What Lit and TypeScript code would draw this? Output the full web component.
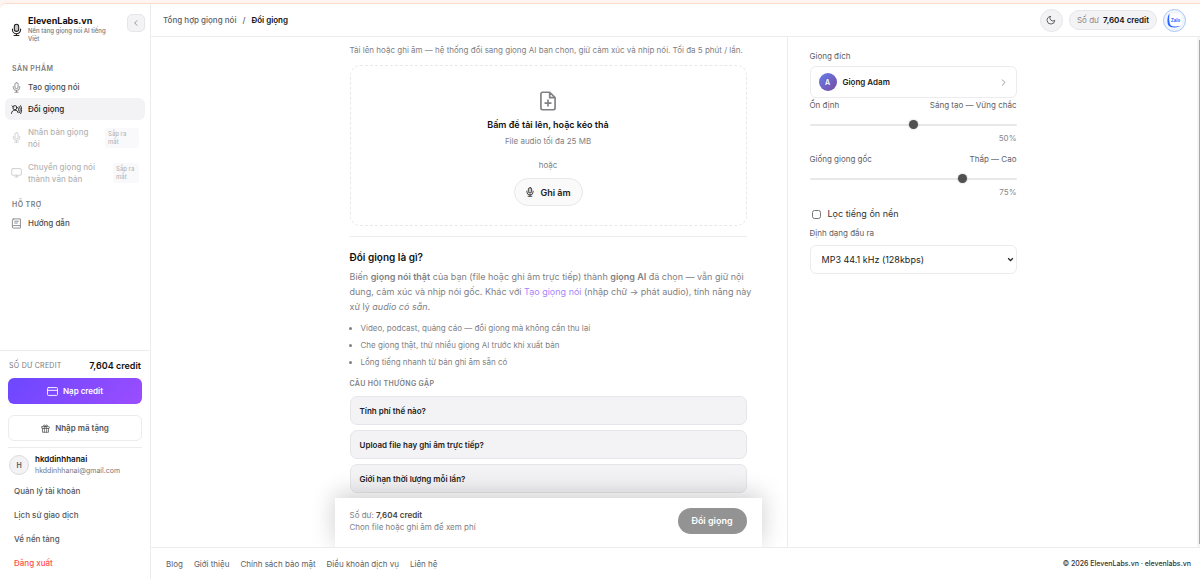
import { LitElement, html, css, svg, nothing } from "lit";
import { customElement, property, state } from "lit/decorators.js";
import { classMap } from "lit/directives/class-map.js";

const icons: Record<string, unknown> = {
  mic: svg`<rect x="8.5" y="1.5" width="7" height="13" rx="3.5"/><path d="M5 10v1.500a7 7 0 0 0 14 0V10M12 18.500V22M8.500 22.200h7"/>`,
  micSolid: svg`<rect x="8" y="1.500" width="8" height="13" rx="4" fill="currentColor" fill-opacity=".25"/><path d="M4.500 10v1.500a7.500 7.500 0 0 0 15 0V10M12 19v3M7.500 22.200h9"/>`,
  people: svg`<circle cx="8.500" cy="8" r="4.500"/><path d="M1 20.500c.5-4.500 3.500-7 7.500-7s6 2 7 5.500M2.500 4l3 3M15.500 8c1.500 2 1.500 5.500 0 8M18 5.500c3 4 3 9.500 0 13.500M21 3.500c3.200 5 3.200 12.500 0 17.500"/>`,
  screen: svg`<rect x="1.500" y="3.500" width="21" height="14.500" rx="2.500"/><path d="M8.500 21.500h7M12 18v3.500"/>`,
  book: svg`<path d="M5.500 2h15v20h-15a2.500 2.500 0 0 1-2.500-2.500v-15A2.500 2.500 0 0 1 5.500 2zM3 19a2.500 2.500 0 0 1 2.500-2.500h15M8 7h8M8 11h6"/>`,
  card: svg`<rect x="1" y="3.500" width="22" height="17" rx="2"/><path d="M1 9.500h22"/>`,
  gift: svg`<rect x="2" y="7" width="20" height="5" rx="1"/><path d="M4 12v10h16V12M9 7v15M15 7v15M12 7C9 7 6.500 5.500 7 3.500S11 2 12 7c1-5 4.500-5.500 5-3.500S15 7 12 7z"/>`,
  left: svg`<path d="M15 5l-7 7 7 7"/>`,
  right: svg`<path d="M9 5l7 7-7 7"/>`,
  down: svg`<path d="M4 8l8 8 8-8" stroke-width="4.500" stroke-linecap="butt" stroke-linejoin="miter"/>`,
  moon: svg`<path d="M10 3.500a7.500 7.500 0 0 0 11 9.500A9.200 9.200 0 1 1 10 3.500z"/>`,
  file: svg`<path d="M14 1.500H5.500a2 2 0 0 0-2 2v17a2 2 0 0 0 2 2h13a2 2 0 0 0 2-2V8zM14 1.500V8h6.500M12 11v7M8.500 14.500h7"/>`,
};

@customElement("ui-icon")
class UiIcon extends LitElement {
  @property() name = "mic";
  static styles = css`
    :host { display: block; flex: none; width: 11px; height: 11px; }
    svg { display: block; width: 100%; height: 100%; fill: none; stroke: currentColor;
      stroke-width: 2; stroke-linecap: round; stroke-linejoin: round; }
  `;
  render() {
    return html`<svg viewBox="0 0 24 24" aria-hidden="true">${icons[this.name]}</svg>`;
  }
}

@customElement("app-sidebar")
class AppSidebar extends LitElement {
  private products = [
    { icon: "mic", label: "Tạo giọng nói" },
    { icon: "people", label: "Đổi giọng", active: true },
    { icon: "mic", label: "Nhân bản giọng nói", soon: true },
    { icon: "screen", label: "Chuyển giọng nói thành văn bản", soon: true },
  ];

  static styles = css`
    * { box-sizing: border-box; }
    :host { display: flex; flex-direction: column; border-right: 1px solid #ececee; min-height: 0; }
    a { color: inherit; text-decoration: none; }
    button { font: inherit; }
    .brand { display: flex; align-items: flex-start; padding: 10px 5px 0 10px; gap: 5px; }
    .brand .logo { width: 13px; height: 14px; margin-top: 9px; color: #222; }
    .names { flex: 1; min-width: 0; padding-right: 10px; }
    .name { font-size: 9px; line-height: 13px; font-weight: 700; color: #111; white-space: nowrap; }
    .tagline { font-size: 6px; line-height: 8px; font-weight: 500; color: #77777b; }
    .collapse { width: 18px; height: 18px; padding: 0; display: grid; place-items: center; color: #666;
      border: 1px solid #e6e6ea; border-radius: 5px; background: #f3f3f6; }
    .collapse ui-icon { width: 8px; height: 8px; }
    nav { padding: 0 5px; margin-top: 19px; flex: 1; }
    .heading { padding: 0 7px; margin: 0; font-size: 7px; line-height: 14px; font-weight: 600;
      letter-spacing: 0.06em; color: #7c7c80; text-transform: uppercase; }
    .items { margin: 0 0 8px; padding: 0; list-style: none; }
    .item { display: flex; align-items: center; gap: 6px; min-height: 22px; padding: 5px 6px;
      border-radius: 6px; font-size: 8px; line-height: 12px; font-weight: 500; color: #4c4c50; }
    .item ui-icon { color: #88888c; }
    .active { background: #f3f3f6; color: #222; }
    .active ui-icon { color: #222; }
    .soon { opacity: 0.42; min-height: 35px; }
    .soon span { flex: 1; }
    .badge { flex: none; font-size: 6px; line-height: 8px; width: 34px; padding: 2px 3px; background: #f3f3f6;
      border-radius: 3px; }
    li:last-child .badge { width: 26px; }
    .account { border-top: 1px solid #ececee; padding: 7px 8px 4px; }
    .balance { display: flex; justify-content: space-between; align-items: center; line-height: 15px;
      padding: 0 1px; font-size: 7px; color: #77777b; }
    .balance span { letter-spacing: 0.04em; }
    .balance b { font-size: 9px; font-weight: 600; color: #111; }
    .topup, .gift { width: 100%; height: 26px; display: flex; align-items: center; justify-content: center; gap: 5px;
      border-radius: 6px; font-size: 8px; font-weight: 600; padding: 0; }
    .topup { margin-top: 5px; border: 0; color: #fff; background: linear-gradient(135deg, #6c47ff, #9b4dff); }
    .gift { margin-top: 11px; border: 1px solid #ececee; background: #fff; color: #555; }
    .gift ui-icon { width: 9px; height: 9px; }
    .user { display: flex; align-items: center; gap: 6px; margin-top: 6px; padding: 6px 1px 0;
      border-top: 1px solid #ececee; }
    .avatar { width: 20px; height: 20px; border: 1px solid #dcdce0; border-radius: 50%; background: #f3f3f6;
      display: grid; place-items: center; font-size: 7px; font-weight: 600; color: #555; }
    .user b { display: block; font-size: 8px; line-height: 11px; font-weight: 600; color: #111; }
    .user small { display: block; font-size: 7px; line-height: 11px; color: #77777b; }
    .links { display: flex; flex-direction: column; padding: 0 6px; margin-top: 3px; font-size: 8px;
      line-height: 24px; font-weight: 500; color: #55555a; }
    .links .logout { color: #ff4d4f; }
  `;

  render() {
    return html`
      <div class="brand">
        <ui-icon class="logo" name="micSolid"></ui-icon>
        <div class="names">
          <div class="name">ElevenLabs.vn</div>
          <div class="tagline">Nền tảng giọng nói AI tiếng Việt</div>
        </div>
        <button class="collapse" aria-label="Thu gọn"><ui-icon name="left"></ui-icon></button>
      </div>
      <nav>
        <h2 class="heading">Sản phẩm</h2>
        <ul class="items">
          ${this.products.map((p) => html`<li
            ><a href="#" class=${classMap({ item: true, active: !!p.active, soon: !!p.soon })}
              ><ui-icon name=${p.icon}></ui-icon><span>${p.label}</span
              >${p.soon ? html`<div class="badge">Sắp ra mắt</div>` : nothing}</a></li>`)}
        </ul>
        <h2 class="heading">Hỗ trợ</h2>
        <ul class="items">
          <li><a href="#" class="item"><ui-icon name="book"></ui-icon><span>Hướng dẫn</span></a></li>
        </ul>
      </nav>
      <div class="account">
        <div class="balance"><span>SỐ DƯ CREDIT</span><b>7,604 credit</b></div>
        <button class="topup"><ui-icon name="card"></ui-icon>Nạp credit</button>
        <button class="gift"><ui-icon name="gift"></ui-icon>Nhập mã tặng</button>
        <div class="user">
          <div class="avatar">H</div>
          <div><b>hkddinhhanai</b><small>hkddinhhanai@gmail.com</small></div>
        </div>
        <div class="links">
          <a href="#">Quản lý tài khoản</a>
          <a href="#">Lịch sử giao dịch</a>
          <a href="#">Về nền tảng</a>
          <a href="#" class="logout">Đăng xuất</a>
        </div>
      </div>
    `;
  }
}

@customElement("voice-settings")
class VoiceSettings extends LitElement {
  @state() private sliders = [
    { id: "stability", label: "Ổn định", range: "Sáng tạo — Vững chắc", value: 50 },
    { id: "similarity", label: "Giống giọng gốc", range: "Thấp — Cao", value: 75 },
  ];

  static styles = css`
    * { box-sizing: border-box; }
    :host { display: block; font-size: 8px; color: #606065; }
    .caption { display: block; line-height: 12px; }
    .voice { width: 100%; height: 32px; margin: 4px 0 0; padding: 0 8px; display: flex; align-items: center;
      gap: 6px; border: 1px solid #ececee; border-radius: 6px; background: #fff; font: inherit;
      font-weight: 600; color: #222; }
    .voice i { width: 18px; height: 18px; border-radius: 50%; display: grid; place-items: center; color: #fff;
      font-style: normal; font-size: 7px; background: linear-gradient(135deg, #667eea, #764ba2); }
    .voice ui-icon { width: 9px; height: 9px; margin-left: auto; color: #77777b; }
    .row { display: flex; justify-content: space-between; line-height: 14px; }
    .slider { height: 54px; }
    input[type="range"] { -webkit-appearance: none; appearance: none; display: block; width: 100%; height: 10px;
      margin: 8px 0 2px; background: transparent; }
    input[type="range"]::-webkit-slider-runnable-track { height: 2px; border-radius: 1px; background: #e8e8e8; }
    input[type="range"]::-webkit-slider-thumb { -webkit-appearance: none; width: 9px; height: 9px; margin-top: -4px;
      border-radius: 50%; background: #505050; box-shadow: 0 0 2px rgba(0, 0, 0, 0.3); }
    output { display: block; text-align: right; line-height: 12px; color: #88888c; }
    .check { display: flex; align-items: center; gap: 7px; padding: 1px 0 0 2px; margin-bottom: 6px; line-height: 14px;
      font-size: 9px; color: #333; }
    .check input { width: 9px; height: 9px; margin: 0; }
    .pick { display: grid; align-items: center; margin-top: 6px; }
    .pick > * { grid-area: 1 / 1; }
    .pick ui-icon { justify-self: end; width: 7px; height: 7px; margin-right: 3px; color: #222; pointer-events: none; }
    select { -webkit-appearance: none; appearance: none; width: 100%; height: 29px; padding: 0 11px;
      border: 1px solid #ececee; border-radius: 6px; background: #fff; font: inherit; font-size: 9px; color: #222; }
  `;

  private onInput(id: string, e: Event) {
    const value = Number((e.target as HTMLInputElement).value);
    this.sliders = this.sliders.map((s) => (s.id === id ? { ...s, value } : s));
  }

  render() {
    return html`
      <span class="caption">Giọng đích</span>
      <button class="voice"><i>A</i>Giọng Adam<ui-icon name="right"></ui-icon></button>
      ${this.sliders.map((s) => html`
        <div class="slider">
          <div class="row"><label for=${s.id}>${s.label}</label><span>${s.range}</span></div>
          <input type="range" id=${s.id} min="0" max="100" .value=${String(s.value)}
            @input=${(e: Event) => this.onInput(s.id, e)} />
          <output for=${s.id}>${s.value}%</output>
        </div>`)}
      <label class="check"><input type="checkbox" />Lọc tiếng ồn nền</label>
      <label class="caption" for="format">Định dạng đầu ra</label>
      <div class="pick">
        <select id="format"><option>MP3 44.1 kHz (128kbps)</option></select>
        <ui-icon name="down"></ui-icon>
      </div>
    `;
  }
}

@customElement("voice-changer")
class VoiceChanger extends LitElement {
  private uses = [
    "Video, podcast, quảng cáo — đổi giọng mà không cần thu lại",
    "Che giọng thật, thử nhiều giọng AI trước khi xuất bản",
    "Lồng tiếng nhanh từ bản ghi âm sẵn có",
  ];
  private questions = [
    "Tính phí thế nào?",
    "Upload file hay ghi âm trực tiếp?",
    "Giới hạn thời lượng mỗi lần?",
  ];

  static styles = css`
    * { box-sizing: border-box; }
    :host { display: block; position: relative; min-height: 0; font-size: 8px; color: #808085; }
    p, h2, h3, ul { margin: 0; }
    .content { padding: 7px 40px 0 15px; }
    .intro { line-height: 12px; }
    .drop { margin-top: 9px; height: 161px; padding-top: 25px; border: 1px dashed #e8e8ea; border-radius: 10px;
      display: flex; flex-direction: column; align-items: center; }
    .drop ui-icon { width: 20px; height: 20px; }
    .drop b { margin-top: 6px; font-size: 9px; line-height: 15px; font-weight: 600; color: #111; }
    .drop span { margin-top: 2px; line-height: 14px; }
    .drop .or { margin-top: 10px; }
    .record { margin-top: 6px; width: 69px; height: 28px; padding: 0; display: flex; align-items: center;
      justify-content: center; gap: 5px; border: 1px solid #e8e8ea; border-radius: 14px; background: #fafafa;
      font: inherit; font-size: 9px; font-weight: 600; color: #222; }
    .record ui-icon { width: 10px; height: 10px; }
    .about { margin-top: 10px; padding-top: 13px; border-top: 1px solid #ececee; }
    h2 { font-size: 10px; line-height: 15px; font-weight: 600; color: #111; }
    .text { margin: 4px -8px 0 0; font-size: 9px; line-height: 15px; }
    .text b { font-weight: 600; }
    .text a { color: #a587fb; text-decoration: none; }
    ul { margin-top: 8px; padding-left: 11px; line-height: 13px; }
    li { margin-bottom: 4px; }
    h3 { margin-top: 10px; font-size: 7px; line-height: 10px; font-weight: 600; letter-spacing: 0.05em;
      text-transform: uppercase; }
    .faq { margin-top: 7px; display: grid; gap: 5px; }
    summary { height: 29px; padding: 0 9px; display: flex; align-items: center; border: 1px solid #e6e6ea;
      border-radius: 7px; background: #f3f3f6; font-weight: 600; color: #222; }
    .bar { position: absolute; left: 0; right: 25px; bottom: 0; height: 49px; padding: 0 15px 3px;
      display: flex; align-items: center; justify-content: space-between; background: #fff;
      box-shadow: 0 -4px 24px rgba(0, 0, 0, 0.2); line-height: 12px; }
    .bar b { font-weight: 600; color: #444; }
    .convert { width: 69px; height: 26px; padding: 0; border: 0; border-radius: 13px; background: #939393;
      color: #fff; font: inherit; font-size: 9px; font-weight: 600; }
  `;

  render() {
    return html`
      <div class="content">
        <p class="intro">Tải lên hoặc ghi âm — hệ thống đổi sang giọng AI bạn chọn, giữ cảm xúc và nhịp nói. Tối đa 5 phút / lần.</p>
        <div class="drop">
          <ui-icon name="file"></ui-icon>
          <b>Bấm để tải lên, hoặc kéo thả</b>
          <span>File audio tối đa 25 MB</span>
          <span class="or">hoặc</span>
          <button class="record"><ui-icon name="micSolid"></ui-icon>Ghi âm</button>
        </div>
        <section class="about">
          <h2>Đổi giọng là gì?</h2>
          <p class="text">Biến <b>giọng nói thật</b> của bạn (file hoặc ghi âm trực tiếp) thành <b>giọng AI</b> đã chọn — vẫn giữ nội dung, cảm xúc và nhịp nói gốc. Khác với <a href="#">Tạo giọng nói</a> (nhập chữ → phát audio), tính năng này xử lý <em>audio có sẵn</em>.</p>
          <ul>${this.uses.map((u) => html`<li>${u}</li>`)}</ul>
          <h3>Câu hỏi thường gặp</h3>
          <div class="faq">
            ${this.questions.map((q) => html`<details><summary>${q}</summary></details>`)}
            <details><summary></summary></details>
          </div>
        </section>
      </div>
      <div class="bar">
        <div>Số dư: <b>7,604 credit</b><br />Chọn file hoặc ghi âm để xem phí</div>
        <button class="convert">Đổi giọng</button>
      </div>
    `;
  }
}

@customElement("app-root")
class AppRoot extends LitElement {
  static styles = css`
    * { box-sizing: border-box; }
    :host { box-sizing: border-box; display: flex; height: 100vh; padding-top: 3px; background: #fff5f0;
      font-family: Inter, "Liberation Sans", sans-serif; font-size: 8px; color: #606065; }
    a { color: inherit; text-decoration: none; }
    .shell { flex: 1; min-width: 0; display: grid; grid-template-columns: 151px minmax(0, 1fr);
      grid-template-rows: minmax(0, 1fr); background: #fff; border-top: 1px solid #fbdccb;
      border-radius: 6px 0 0 0; overflow: hidden; }
    .main { display: flex; flex-direction: column; min-height: 0; }
    .topbar { height: 33px; padding: 0 14px 0 12px; display: flex; align-items: center; gap: 6px;
      border-bottom: 1px solid #ececee; }
    .crumbs { flex: 1; display: flex; gap: 6px; font-weight: 500; }
    .crumbs b { font-weight: 600; color: #111; }
    .round { width: 23px; height: 23px; padding: 0; display: grid; place-items: center; border-radius: 50%;
      border: 1px solid #e6e6ea; background: #f3f3f6; color: #444; }
    .round ui-icon { width: 10px; height: 10px; }
    .credit { height: 20px; padding: 0 7px; display: flex; align-items: center; gap: 4px;
      border: 1px solid #e6e6ea; border-radius: 10px; background: #f3f3f6; color: #88888c; }
    .credit b { font-weight: 600; color: #111; }
    .zalo { border-color: #a9c8fb; background: #f0f4fb; }
    .zalo svg { width: 15px; height: 15px; display: block; }
    .workspace { flex: 1; min-height: 0; overflow: hidden; display: grid; padding-left: 3px;
      grid-template-columns: minmax(0, 1fr) 452px 230px minmax(0, 1fr) 3px; grid-template-rows: minmax(0, 1fr); }
    voice-changer { grid-column: 2; }
    voice-settings { grid-column: 3; border-left: 1px solid #ececee; padding: 13px 0 0 22px; }
    .scroll { grid-column: 5; background: #f5f5f5; padding: 3px 0 3px 2px; }
    .thumb { height: 100%; background: #a8a8a8; }
    footer { height: 32px; padding: 0 9px 0 15px; display: flex; align-items: center; gap: 11px;
      border-top: 1px solid #ececee; }
    .copy { margin-left: auto; font-size: 7px; font-weight: 500; color: #333; }
  `;

  render() {
    return html`
      <div class="shell">
        <app-sidebar></app-sidebar>
        <div class="main">
          <header class="topbar">
            <div class="crumbs"><a href="#">Tổng hợp giọng nói</a><span>/</span><b>Đổi giọng</b></div>
            <button class="round" aria-label="Giao diện tối"><ui-icon name="moon"></ui-icon></button>
            <div class="credit">Số dư <b>7,604 credit</b></div>
            <button class="round zalo" aria-label="Zalo">
              <svg viewBox="0 0 30 30">
                <rect x="4" y="1" width="25" height="25" rx="7" fill="#fff"/>
                <path d="M5 1C0 6 0 20 3 25c4 5 17 5 24 1-8 1.500-17 1.500-20-2C4 19 4 9 5 1z" fill="#2962ff"/>
                <text x="8" y="17" font-size="9" font-weight="700" fill="#2962ff">Zalo</text>
              </svg>
            </button>
          </header>
          <div class="workspace">
            <voice-changer></voice-changer>
            <voice-settings></voice-settings>
            <div class="scroll"><div class="thumb"></div></div>
          </div>
          <footer>
            <a href="#">Blog</a><a href="#">Giới thiệu</a><a href="#">Chính sách bảo mật</a>
            <a href="#">Điều khoản dịch vụ</a><a href="#">Liên hệ</a>
            <span class="copy">© 2026 ElevenLabs.vn · elevenlabs.vn</span>
          </footer>
        </div>
      </div>
    `;
  }
}
